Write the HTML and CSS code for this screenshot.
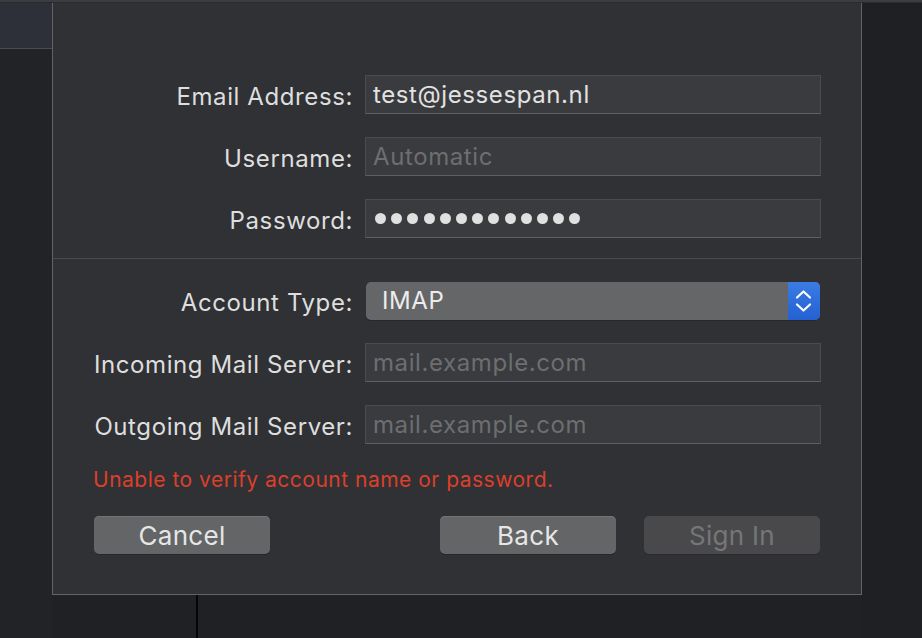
FILE: index.html
```
<!DOCTYPE html>
<html lang="en">
<head>
  <meta charset="UTF-8" />
  <title>Add Account</title>
  <link rel="stylesheet" href="styles.css">
</head>
<body>
  <div class="topbar"></div>
  <div class="stage">
    <aside class="side-left"><div class="side-top"></div></aside>

    <div class="center">
      <div class="sheet">
        <div class="form">
          <label class="lbl" for="email">Email Address:</label>
          <input class="field" id="email" type="text" value="test@jessespan.nl">

          <label class="lbl" for="user">Username:</label>
          <input class="field" id="user" type="text" placeholder="Automatic">

          <label class="lbl">Password:</label>
          <div class="field dots">
            <span></span><span></span><span></span><span></span><span></span><span></span><span></span>
            <span></span><span></span><span></span><span></span><span></span><span></span>
          </div>
        </div>

        <hr class="sep">

        <div class="form">
          <label class="lbl">Account Type:</label>
          <div class="popup">
            <span class="popup-text">IMAP</span>
            <span class="popup-arrows">
              <svg width="32" height="38" viewBox="0 0 32 38">
                <polyline points="9,15.5 15.5,9.5 22,15.5" fill="none" stroke="#fff" stroke-width="2.2" stroke-linecap="round" stroke-linejoin="round"/>
                <polyline points="9,22.5 15.5,28.5 22,22.5" fill="none" stroke="#fff" stroke-width="2.2" stroke-linecap="round" stroke-linejoin="round"/>
              </svg>
            </span>
          </div>

          <label class="lbl" for="incoming">Incoming Mail Server:</label>
          <input class="field" id="incoming" type="text" placeholder="mail.example.com">

          <label class="lbl" for="outgoing">Outgoing Mail Server:</label>
          <input class="field" id="outgoing" type="text" placeholder="mail.example.com">
        </div>

        <p class="error">Unable to verify account name or password.</p>

        <div class="actions">
          <button class="btn">Cancel</button>
          <span class="spacer"></span>
          <button class="btn">Back</button>
          <button class="btn disabled" disabled>Sign In</button>
        </div>
      </div>
      <div class="below"><div class="divider"></div></div>
    </div>

    <aside class="side-right"></aside>
  </div>
</body>
</html>
```

FILE: styles.css
```
body { margin: 0; height: 638px; overflow: hidden; background: #1f2024; font-family: Inter, "Liberation Sans", sans-serif; }

.topbar { height: 3px; background: #3c3d41; border-bottom: 1px solid #2a2b2e; box-sizing: border-box; }
.stage { display: flex; height: 635px; }

.side-left { width: 52px; background: #222327; }
.side-top { height: 45px; background: #2d3038; border-bottom: 1px solid #4a4b50; }
.side-right { flex: 1; background: #1f2024; }

.center { width: 810px; display: flex; flex-direction: column; }
.sheet { background: #303134; border: 1px solid #626366; border-top: none; padding: 72px 40px 40px; box-shadow: 0 1px 0 #141416; }
.below { flex: 1; background: #202125; }
.divider { margin-left: 144px; width: 2px; height: 100%; background: #050506; }

.form { display: grid; grid-template-columns: 1fr 456px; grid-auto-rows: 39px; column-gap: 12px; row-gap: 23px; }
.lbl { align-self: center; text-align: right; color: #dedede; font-size: 24px; letter-spacing: 0.6px; padding-top: 3px; }

.field { box-sizing: border-box; height: 39px; margin: 0; padding: 0 7px; background: #3a3b3e; border: 1px solid #4a4b4e; border-bottom-color: #5e5f62; color: #e2e2e2; font: 24px Inter, "Liberation Sans", sans-serif; letter-spacing: 0.6px; outline: none; }
.field::placeholder { color: #6d6e70; }

.dots { display: flex; align-items: center; gap: 5.2px; padding-left: 9px; }
.dots span { width: 11px; height: 11px; border-radius: 50%; background: #e0e0e0; }

.sep { border: none; height: 1px; background: #48494c; margin: 20px -40px 22px; }

.popup { align-self: end; height: 38px; margin-left: 1px; margin-right: 1px; display: flex; background: #656668; border-radius: 5px; overflow: hidden; box-shadow: 0 1px 0 #262729; }
.popup-text { flex: 1; padding-left: 16px; line-height: 38px; color: #ececec; font-size: 24px; letter-spacing: 0.6px; }
.popup-arrows { width: 32px; background: linear-gradient(#3a7ce4, #2460d2); }
.popup-arrows svg { display: block; }

.error { margin: 23px 0 0; line-height: 26px; color: #dc3f2b; font-size: 21px; letter-spacing: 0.5px; }

.actions { display: flex; gap: 28px; margin-top: 23px; padding: 0 1px; }
.spacer { flex: 1; }
.btn { width: 176px; height: 38px; border: none; border-radius: 5px; background: #646567; color: #e6e6e6; font: 26px Inter, "Liberation Sans", sans-serif; letter-spacing: 0.3px; box-shadow: 0 1px 0 #252628, inset 0 1px 0 #727375; }
.btn.disabled { background: #49494c; color: #757678; box-shadow: 0 1px 0 #2a2b2d; }
```
